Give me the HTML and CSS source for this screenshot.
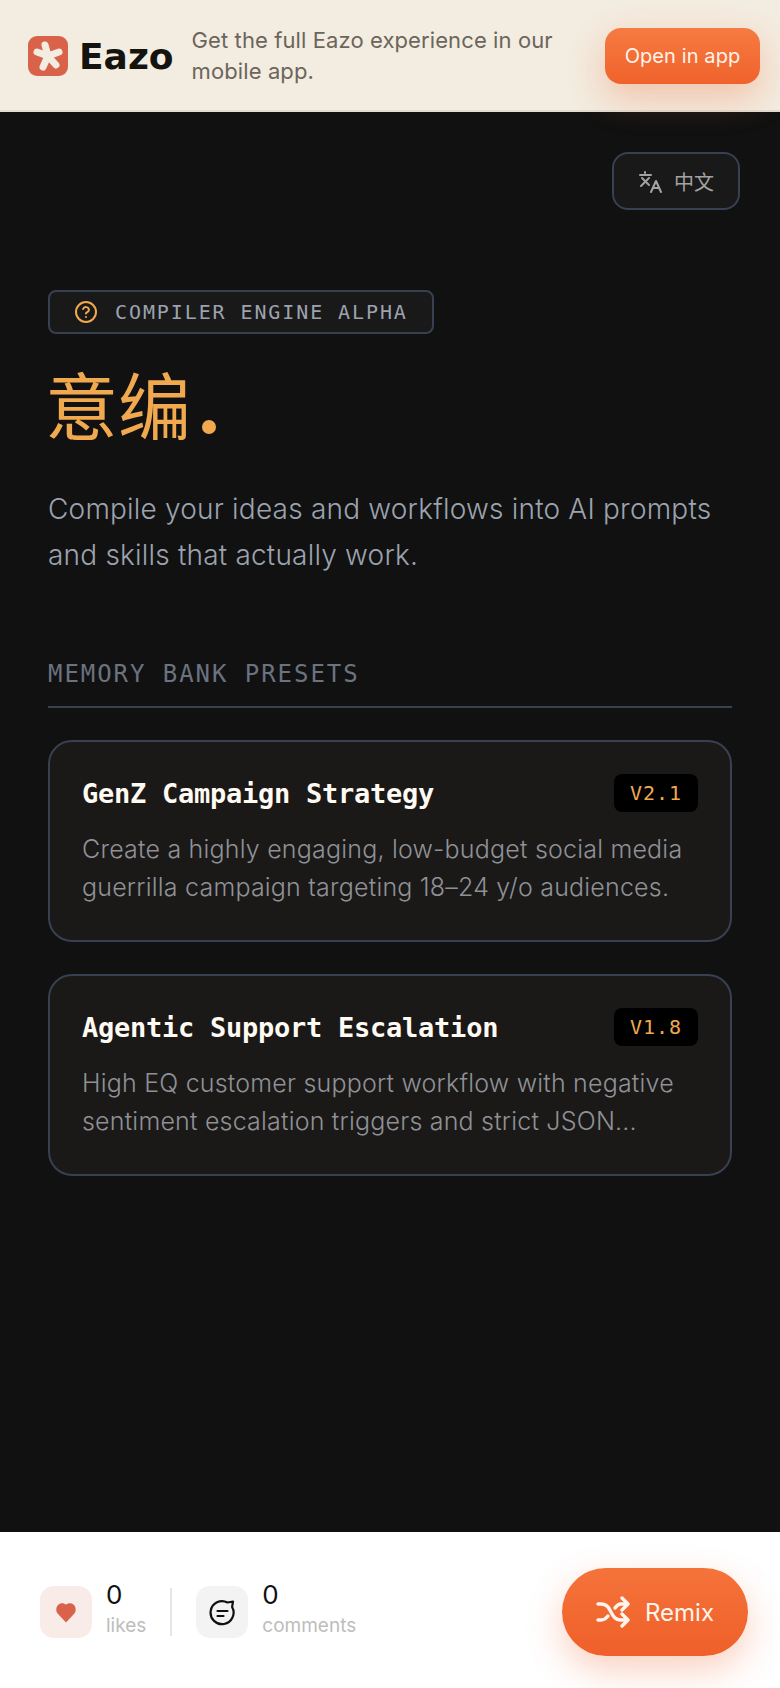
FILE: index.html
```html
<!DOCTYPE html>
<html lang="en">
<head>
    <meta charset="UTF-8">
    <meta name="viewport" content="width=device-width, initial-scale=1.0">
    <title>意编</title>
    <link rel="stylesheet" href="styles.css">
</head>
<body>
    <header class="banner">
        <div class="brand">
            <svg class="brand-icon" viewBox="0 0 40 40" width="40" height="40">
                <rect width="40" height="40" rx="9" fill="#d9634a"/>
                <g stroke="#f3ece0" stroke-width="7" stroke-linecap="round">
                    <path d="M20 20 L17 9"/>
                    <path d="M20 20 L31 16"/>
                    <path d="M20 20 L28 29"/>
                    <path d="M20 20 L15 31"/>
                    <path d="M20 20 L9 16"/>
                </g>
            </svg>
            <span class="brand-name">Eazo</span>
        </div>
        <p class="banner-text">Get the full Eazo experience in our mobile app.</p>
        <button class="open-btn">Open in app</button>
    </header>

    <main class="page">
        <div class="lang-row">
            <button class="lang-btn">
                <svg viewBox="0 0 24 24" width="24" height="24" fill="none" stroke="#a3a3a3" stroke-width="2" stroke-linecap="round" stroke-linejoin="round">
                    <path d="M2 6h11"/>
                    <path d="M7 3v1"/>
                    <path d="M4 9l7 7"/>
                    <path d="M11 9l-8 8"/>
                    <path d="M13 23l5-11 5 11"/>
                    <path d="M15 19h6"/>
                </svg>
                <span>中文</span>
            </button>
        </div>

        <div class="badge">
            <svg viewBox="0 0 24 24" width="24" height="24" fill="none" stroke="#f0a94f" stroke-width="2" stroke-linecap="round" stroke-linejoin="round">
                <circle cx="12" cy="12" r="10"/>
                <path d="M9.1 9a3 3 0 0 1 5.8 1c0 2-3 2.6-3 3.5"/>
                <path d="M12 17h.01"/>
            </svg>
            <span>COMPILER ENGINE ALPHA</span>
        </div>

        <h1 class="title">意编<span class="title-dot"></span></h1>
        <p class="lead">Compile your ideas and workflows into AI prompts and skills that actually work.</p>

        <h2 class="section-label">MEMORY BANK PRESETS</h2>

        <section class="cards">
            <article class="card">
                <div class="card-head">
                    <h3>GenZ Campaign Strategy</h3>
                    <span class="version">V2.1</span>
                </div>
                <p>Create a highly engaging, low-budget social media guerrilla campaign targeting 18–24 y/o audiences.</p>
            </article>
            <article class="card">
                <div class="card-head">
                    <h3>Agentic Support Escalation</h3>
                    <span class="version">V1.8</span>
                </div>
                <p>High EQ customer support workflow with negative sentiment escalation triggers and strict JSON...</p>
            </article>
        </section>
    </main>

    <footer class="footer">
        <div class="stat">
            <div class="stat-icon stat-icon-like">
                <svg viewBox="0 0 24 24" width="24" height="24">
                    <path d="M12 22.5 3.6 13.6C1 10.5 2.2 4 7.4 3.2c2-.2 3.600.5 4.600 1.400 1-.9 2.600-1.600 4.600-1.400 5.200.8 6.400 7.300 3.800 10.400z" fill="#d9634a"/>
                </svg>
            </div>
            <div class="stat-text">
                <strong>0</strong>
                <span>likes</span>
            </div>
        </div>
        <div class="divider"></div>
        <div class="stat">
            <div class="stat-icon">
                <svg viewBox="0 0 28 28" width="28" height="28" fill="none" stroke="#111" stroke-width="2.2" stroke-linecap="round" stroke-linejoin="round">
                    <path d="M25 3.500l-.9 5.500A11.500 11.500 0 1 1 19.500 4.500z"/>
                    <path d="M9.500 13h10"/>
                    <path d="M9.500 18h6"/>
                </svg>
            </div>
            <div class="stat-text">
                <strong>0</strong>
                <span>comments</span>
            </div>
        </div>
        <button class="remix-btn">
            <svg viewBox="0 0 34 32" width="34" height="32" fill="none" stroke="#fff5ec" stroke-width="3.4" stroke-linecap="round" stroke-linejoin="round">
                <path d="M2 8h3c6 0 8 4 10 8s4 8 10 8h6"/>
                <path d="M2 24h3c3 0 5-1.500 7-4"/>
                <path d="M19 12c2-3 3-4 6-4h6"/>
                <path d="M26 2l6 6-6 6"/>
                <path d="M26 18l6 6-6 6"/>
            </svg>
            <span>Remix</span>
        </button>
    </footer>
</body>
</html>
```

FILE: styles.css
```css
* {
    box-sizing: border-box;
}
body {
    margin: 0;
    height: 1688px;
    display: flex;
    flex-direction: column;
    background-color: #111111;
    font-family: Inter, sans-serif;
    overflow: hidden;
}
button {
    font-family: inherit;
    border: none;
}

/* top banner */
.banner {
    position: relative;
    z-index: 1;
    height: 112px;
    flex-shrink: 0;
    display: flex;
    align-items: center;
    padding: 2px 20px 0 28px;
    background-color: #f3ece0;
    border-bottom: 2px solid #e2dcd1;
}
.brand {
    display: flex;
    align-items: center;
    gap: 11px;
    margin-right: 18px;
}
.brand-icon {
    display: block;
}
.brand-name {
    font-family: "DejaVu Sans", sans-serif;
    font-size: 36px;
    font-weight: 700;
    color: #14130f;
}
.banner-text {
    flex: 1;
    margin: 0;
    font-size: 22px;
    line-height: 31px;
    letter-spacing: 0.1px;
    color: #6b655c;
}
.open-btn {
    width: 155px;
    height: 56px;
    border-radius: 16px;
    font-size: 20px;
    letter-spacing: 0.1px;
    color: #fff5ec;
    background: linear-gradient(#f67b42, #f0622b);
    box-shadow: 0 14px 36px rgba(240, 98, 43, 0.3);
}

/* main column */
.page {
    flex: 1;
    padding: 40px 48px 0;
}
.lang-row {
    display: flex;
    justify-content: flex-end;
    margin-right: -8px;
}
.lang-btn {
    width: 128px;
    height: 58px;
    display: flex;
    align-items: center;
    justify-content: center;
    gap: 12px;
    border: 2px solid #374151;
    border-radius: 16px;
    background-color: #191919;
    color: #a3a3a3;
    font-family: "Noto Sans CJK SC", sans-serif;
    font-size: 20px;
}
.badge {
    width: 386px;
    height: 44px;
    margin-top: 80px;
    display: flex;
    align-items: center;
    gap: 17px;
    padding-left: 24px;
    border: 2px solid #374151;
    border-radius: 8px;
    background-color: #191919;
    color: #9ca3af;
    font-family: "DejaVu Sans Mono", monospace;
    font-size: 20px;
    letter-spacing: 1.9px;
}
.title {
    margin: 30px 0 0 -3px;
    display: flex;
    align-items: flex-end;
    height: 84px;
    font-family: "Noto Sans CJK SC", sans-serif;
    font-size: 73px;
    line-height: 92px;
    font-weight: 400;
    color: #f0a94f;
}
.title-dot {
    width: 14px;
    height: 14px;
    margin: 0 0 14px 11px;
    border-radius: 50%;
    background-color: #f0a94f;
}
.lead {
    margin: 38px 0 0;
    font-size: 28px;
    font-weight: 300;
    line-height: 46px;
    letter-spacing: 0.2px;
    color: #9ca3af;
}
.section-label {
    margin: 82px 0 0;
    padding-bottom: 18px;
    border-bottom: 2px solid #374151;
    font-family: "DejaVu Sans Mono", monospace;
    font-size: 24px;
    font-weight: 400;
    letter-spacing: 1.95px;
    color: #6b7280;
}

/* preset cards */
.cards {
    margin-top: 32px;
    display: flex;
    flex-direction: column;
    gap: 32px;
}
.card {
    height: 202px;
    padding: 32px;
    border: 2px solid #374151;
    border-radius: 24px;
    background-color: #1a1918;
}
.card-head {
    display: flex;
    justify-content: space-between;
    align-items: center;
}
.card h3 {
    margin: 0;
    font-family: "DejaVu Sans Mono", monospace;
    font-size: 27px;
    font-weight: 700;
    letter-spacing: -0.25px;
    color: #fffaf2;
}
.version {
    width: 84px;
    height: 38px;
    display: flex;
    align-items: center;
    justify-content: center;
    border-radius: 8px;
    background-color: #000;
    color: #f0a94f;
    font-family: "DejaVu Sans Mono", monospace;
    font-size: 20px;
    letter-spacing: 1px;
}
.card p {
    margin: 18px 0 0;
    font-size: 25px;
    font-weight: 300;
    line-height: 38px;
    letter-spacing: 0.2px;
    color: #8f9196;
}

/* bottom bar */
.footer {
    height: 156px;
    flex-shrink: 0;
    display: flex;
    align-items: center;
    padding: 4px 32px 0 40px;
    background-color: #fff;
}
.stat {
    display: flex;
    align-items: center;
    gap: 14px;
}
.stat-icon {
    width: 52px;
    height: 52px;
    display: flex;
    align-items: center;
    justify-content: center;
    border-radius: 14px;
    background-color: #f3f3f3;
}
.stat-icon-like {
    background-color: #f9ece8;
}
.stat-text {
    display: flex;
    flex-direction: column;
    gap: 1px;
    margin-bottom: 5px;
}
.stat-text strong {
    font-size: 26px;
    line-height: 32px;
    font-weight: 400;
    color: #111;
}
.stat-text span {
    font-size: 19px;
    line-height: 28px;
    color: #bdbdbd;
}
.divider {
    width: 2px;
    height: 48px;
    margin: 0 24px;
    background-color: #e6e6e6;
}
.remix-btn {
    width: 186px;
    height: 88px;
    margin-left: auto;
    display: flex;
    align-items: center;
    justify-content: center;
    gap: 15px;
    border-radius: 44px;
    font-size: 24px;
    color: #fff5ec;
    background: linear-gradient(#f5733a, #ef5f2a);
    box-shadow: 0 14px 36px rgba(240, 98, 43, 0.3);
}
```
